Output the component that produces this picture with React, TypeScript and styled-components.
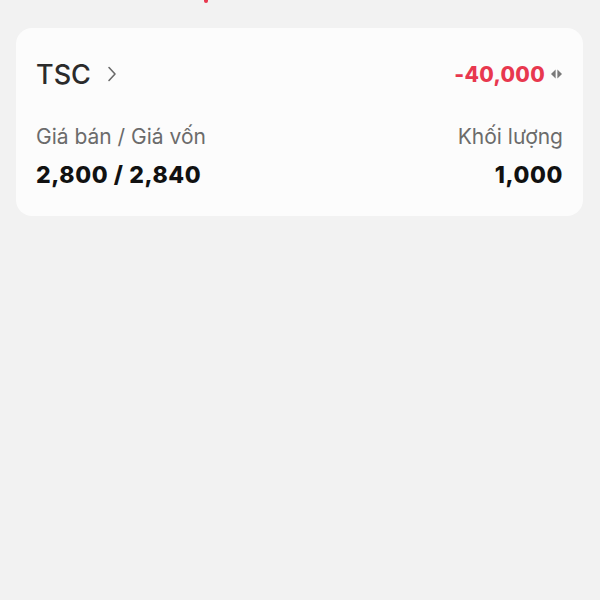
import React from "react";
import styled, { createGlobalStyle } from "styled-components";

const GlobalStyle = createGlobalStyle`
    html, body {
        margin: 0;
        padding: 0;
        background: #f2f2f2;
        font-family: Inter, "Noto Sans", sans-serif;
    }
`;

function SwapIcon(): React.ReactElement {
    return (
        <svg width="13" height="10" viewBox="0 0 13 10">
            <path d="M5.6 0.5 L1 5 L5.6 9.5 Z" fill="#7a7a7a" />
            <path d="M7.4 0.5 L12 5 L7.4 9.5 Z" fill="#7a7a7a" />
        </svg>
    );
}

function Chevron(): React.ReactElement {
    return (
        <svg width="10" height="16" viewBox="0 0 10 16">
            <path d="M2 1.5 L8 8 L2 14.5" fill="none" stroke="#6a6a6a" strokeWidth="1.6" strokeLinecap="round" strokeLinejoin="round" />
        </svg>
    );
}

function App(): React.ReactElement {
    return (
        <Page>
            <GlobalStyle />
            <TopMark />
            <Card>
                <HeaderRow>
                    <Symbol>
                        TSC
                        <Chevron />
                    </Symbol>
                    <Profit>
                        -40,000
                        <SwapIcon />
                    </Profit>
                </HeaderRow>
                <InfoRow>
                    <Column>
                        <Label>Giá bán / Giá vốn</Label>
                        <Value>2,800 / 2,840</Value>
                    </Column>
                    <Column $right>
                        <Label>Khối lượng</Label>
                        <Value>1,000</Value>
                    </Column>
                </InfoRow>
            </Card>
        </Page>
    );
}

const Page = styled.div`
    width: 600px;
    height: 600px;
    box-sizing: border-box;
    padding: 0 16px;
    background: #f2f2f2;
    display: flex;
    flex-direction: column;
    overflow: hidden;
`;

const TopMark = styled.div`
    width: 4px;
    height: 3px;
    margin-left: 188px;
    margin-bottom: 25px;
    background: #e8384f;
    border-radius: 0 0 2px 2px;
`;

const Card = styled.div`
    background: #fcfcfc;
    border-radius: 16px;
    padding: 28px 20px 27px 20px;
    margin-right: 1px;
    display: flex;
    flex-direction: column;
`;

const HeaderRow = styled.div`
    display: flex;
    justify-content: space-between;
    align-items: center;
    height: 36px;
`;

const Symbol = styled.div`
    display: flex;
    align-items: center;
    gap: 16px;
    font-size: 27px;
    font-weight: 500;
    color: #2b2b2b;
`;

const Profit = styled.div`
    display: flex;
    align-items: center;
    gap: 5px;
    font-size: 21px;
    font-weight: 800;
    letter-spacing: 0.3px;
    color: #e8384f;
`;

const InfoRow = styled.div`
    display: flex;
    justify-content: space-between;
    margin-top: 32px;
`;

const Column = styled.div<{ $right?: boolean }>`
    display: flex;
    flex-direction: column;
    align-items: ${(p) => (p.$right ? "flex-end" : "flex-start")};
    gap: 12px;
`;

const Label = styled.div`
    font-size: 21px;
    line-height: 25px;
    color: #6b6b6b;
`;

const Value = styled.div`
    font-size: 23px;
    line-height: 28px;
    font-weight: 800;
    letter-spacing: 0.6px;
    color: #111111;
`;

export default App;
